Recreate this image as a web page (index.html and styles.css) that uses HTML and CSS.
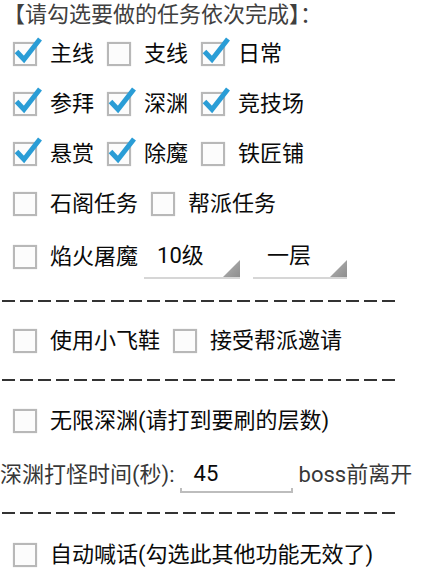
FILE: index.html
```html
<!DOCTYPE html>
<html lang="zh-CN">
<head>
<meta charset="utf-8">
<title>任务设置</title>
<link rel="stylesheet" href="styles.css">
</head>
<body>
<div class="page">
  <div class="title">【请勾选要做的任务依次完成】：</div>

  <div class="row">
    <label class="cb on"><span class="box"><svg class="tick" viewBox="-4 -8 34 32" width="34" height="32"><path d="M3.5 9.5 L11 17.5 L27 -3" /></svg></span><span class="lbl">主线</span></label>
    <label class="cb"><span class="box"></span><span class="lbl">支线</span></label>
    <label class="cb on"><span class="box"><svg class="tick" viewBox="-4 -8 34 32" width="34" height="32"><path d="M3.5 9.5 L11 17.5 L27 -3" /></svg></span><span class="lbl">日常</span></label>
  </div>

  <div class="row">
    <label class="cb on"><span class="box"><svg class="tick" viewBox="-4 -8 34 32" width="34" height="32"><path d="M3.5 9.5 L11 17.5 L27 -3" /></svg></span><span class="lbl">参拜</span></label>
    <label class="cb on"><span class="box"><svg class="tick" viewBox="-4 -8 34 32" width="34" height="32"><path d="M3.5 9.5 L11 17.5 L27 -3" /></svg></span><span class="lbl">深渊</span></label>
    <label class="cb on"><span class="box"><svg class="tick" viewBox="-4 -8 34 32" width="34" height="32"><path d="M3.5 9.5 L11 17.5 L27 -3" /></svg></span><span class="lbl">竞技场</span></label>
  </div>

  <div class="row">
    <label class="cb on"><span class="box"><svg class="tick" viewBox="-4 -8 34 32" width="34" height="32"><path d="M3.5 9.5 L11 17.5 L27 -3" /></svg></span><span class="lbl">悬赏</span></label>
    <label class="cb on"><span class="box"><svg class="tick" viewBox="-4 -8 34 32" width="34" height="32"><path d="M3.5 9.5 L11 17.5 L27 -3" /></svg></span><span class="lbl">除魔</span></label>
    <label class="cb"><span class="box"></span><span class="lbl">铁匠铺</span></label>
  </div>

  <div class="row">
    <label class="cb"><span class="box"></span><span class="lbl">石阁任务</span></label>
    <label class="cb"><span class="box"></span><span class="lbl">帮派任务</span></label>
  </div>

  <div class="row row-spin">
    <label class="cb"><span class="box"></span><span class="lbl">焰火屠魔</span></label>
    <div class="spin spin-level"><span class="spin-text">10级</span><span class="spin-arrow"></span></div>
    <div class="spin spin-floor"><span class="spin-text">一层</span><span class="spin-arrow"></span></div>
  </div>

  <div class="sep sep-1"><div class="dash"></div></div>

  <div class="row row-6">
    <label class="cb"><span class="box"></span><span class="lbl">使用小飞鞋</span></label>
    <label class="cb"><span class="box"></span><span class="lbl">接受帮派邀请</span></label>
  </div>

  <div class="sep sep-2"><div class="dash"></div></div>

  <div class="row row-7">
    <label class="cb"><span class="box"></span><span class="lbl">无限深渊(请打到要刷的层数)</span></label>
  </div>

  <div class="row row-time">
    <span class="plain">深渊打怪时间(秒):</span>
    <span class="edit">45</span>
    <span class="plain after">boss前离开</span>
  </div>

  <div class="sep sep-3"><div class="dash"></div></div>

  <div class="row row-9">
    <label class="cb"><span class="box"></span><span class="lbl">自动喊话(勾选此其他功能无效了)</span></label>
  </div>
</div>
</body>
</html>
```

FILE: styles.css
```css
html, body {
  margin: 0;
  padding: 0;
  background: #ffffff;
  overflow: hidden;
}

.page {
  font-family: Roboto, "Noto Sans CJK SC", "Noto Sans", sans-serif;
  font-size: 22px;
  color: #0a0a0a;
  width: 433px;
}

.title {
  height: 29px;
  line-height: 29px;
  padding-left: 3px;
  color: #404040;
  white-space: nowrap;
}

.row {
  display: flex;
  align-items: center;
  height: 50px;
  padding-left: 13px;
  white-space: nowrap;
}

.row-spin { height: 56px; }
.row-6 { height: 48px; }
.row-7 { height: 52px; }
.row-time { height: 56px; padding-left: 0; }
.row-9 { height: 64px; }

.cb {
  display: flex;
  align-items: center;
}

.cb + .cb {
  margin-left: 13px;
}

.box {
  position: relative;
  width: 24px;
  height: 24px;
  margin-right: 13px;
  box-sizing: border-box;
  background: #fcfcfc;
  box-shadow: inset 0 0 0 2px #b8b8b8, 0 0 1px rgba(0, 0, 0, 0.2);
  flex: none;
}

.tick {
  position: absolute;
  left: -4px;
  top: -8px;
  overflow: visible;
}

.tick path {
  fill: none;
  stroke: #2a9dd6;
  stroke-width: 5;
  stroke-linejoin: miter;
  stroke-linecap: butt;
}

.lbl {
  line-height: 30px;
}

/* spinners */
.spin {
  position: relative;
  display: flex;
  align-items: center;
  height: 44px;
  box-sizing: border-box;
  padding-left: 13px;
  border-bottom: 2px solid #d6d6d6;
}

.spin-level {
  width: 96px;
  margin-left: 6px;
}

.spin-floor {
  width: 94px;
  margin-left: 13px;
  padding-left: 14px;
}

.spin-text {
  line-height: 30px;
}

.spin-arrow {
  position: absolute;
  right: 0;
  bottom: 0;
  width: 17px;
  height: 17px;
  background: linear-gradient(135deg, #b4b4b4, #8e8e8e);
  clip-path: polygon(100% 0, 100% 100%, 0 100%);
}

/* separators */
.sep {
  display: flex;
  flex-direction: column;
  box-sizing: border-box;
}

.sep-1 { height: 32px; padding-top: 15px; }
.sep-2 { height: 30px; padding-top: 14px; }
.sep-3 { height: 20px; padding-top: 9px; }

.dash {
  width: 393px;
  height: 2px;
  margin-left: 2px;
  background: repeating-linear-gradient(90deg, #333333 0, #333333 13px, transparent 13px, transparent 18.1px);
}

/* time row */
.plain {
  color: #383838;
  line-height: 30px;
}

.edit {
  width: 113px;
  height: 36px;
  box-sizing: border-box;
  margin-left: 5px;
  padding-left: 14px;
  padding-bottom: 4px;
  display: flex;
  align-items: center;
  color: #0a0a0a;
  background:
    linear-gradient(#bdbdbd, #bdbdbd) left bottom / 100% 2px no-repeat,
    linear-gradient(#bdbdbd, #bdbdbd) left bottom / 2px 5px no-repeat,
    linear-gradient(#bdbdbd, #bdbdbd) right bottom / 2px 5px no-repeat;
}

.after {
  margin-left: 6px;
}
```
